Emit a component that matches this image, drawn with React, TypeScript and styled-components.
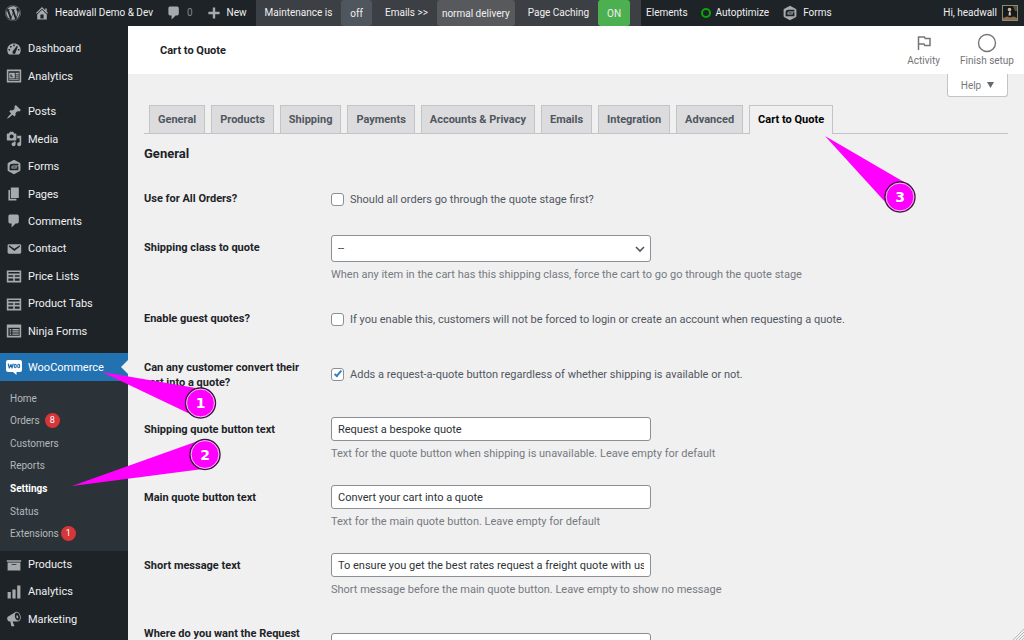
import React from "react";
import styled, { createGlobalStyle, css } from "styled-components";
import { FaWordpress } from "react-icons/fa";

const GlobalStyle = createGlobalStyle`
  *, *::before, *::after { box-sizing: border-box; }
  body { margin: 0; background: #f0f0f1; font-family: Roboto, "Liberation Sans", sans-serif; font-size: 11px; color: #3c434a; }
  ul { list-style: none; margin: 0; padding: 0; }
  a { color: inherit; text-decoration: none; }
  h1, h2 { margin: 0; }
  button, input, select { font-family: inherit; }
`;

/* ---------- icons, drawn on a 20 unit grid ---------- */

const paths = {
  home: "M16 8.5l1.53 1.53-1.06 1.06L10 4.6l-6.47 6.49-1.06-1.06L10 2.5l4 4v-2h2v4zm-6-2.46l6 5.99V18H4v-5.97zM12 17v-5H8v5h4z",
  comment: "M5 2h9c1.1 0 2 .9 2 2v7c0 1.1-.9 2-2 2h-2l-5 5v-5H5c-1.1 0-2-.9-2-2V4c0-1.1.9-2 2-2z",
  plus: "M17 8.5v3h-5.5V17h-3v-5.5H3v-3h5.5V3h3v5.5z",
  dashboard:
    "M3.76 17h12.48c1.34-1.59 2.15-3.65 2.15-5.9C18.39 6.07 14.6 3 10 3S1.61 6.07 1.61 11.1c0 2.25.81 4.31 2.15 5.9zM9 4.5h2v2H9zM5 6.2h2v2H5zM3.2 10h2v2h-2zM14.8 10h2v2h-2zM8.2 13.2L13.6 6l1.2.8-3 8.2a2 2 0 1 1-3.6-1.8z",
  analytics:
    "M1 2h18v16H1zM3 4v12h14V4zM4 6h7v7H4zM6 8a2 2 0 1 0 3 2.6H7V8zM12 6h4v2h-4zM12 9h4v1.5h-4zM12 11.5h4V13h-4zM4 14h12v1H4z",
  pin: "M10.44 3.02l1.82-1.82 6.36 6.35-1.83 1.82c-1.05-.68-2.48-.57-3.41.36l-.75.75c-.92.93-1.04 2.35-.35 3.41l-1.83 1.82-2.41-2.41-2.8 2.79c-.42.42-3.38 2.71-3.8 2.29s1.86-3.39 2.28-3.81l2.79-2.79L4.1 9.36l1.83-1.82c1.05.69 2.48.57 3.4-.36l.75-.75c.93-.92 1.05-2.35.36-3.41z",
  media:
    "M13 11V4c0-.55-.45-1-1-1h-1.67L9 1H5L3.67 3H2c-.55 0-1 .45-1 1v7c0 .55.45 1 1 1h10c.55 0 1-.45 1-1zM7 4.5c1.38 0 2.5 1.12 2.5 2.5S8.38 9.5 7 9.5 4.5 8.38 4.5 7 5.62 4.5 7 4.5zM14 6h5v10.5c0 1.38-1.12 2.5-2.5 2.5S14 17.88 14 16.5s1.12-2.5 2.5-2.5c.17 0 .34.02.5.05V9h-3V6zm-4 8.05V13h2v3.5c0 1.38-1.12 2.5-2.5 2.5S7 17.88 7 16.5 8.12 14 9.5 14c.17 0 .34.02.5.05z",
  hexagon:
    "M10 1l7 3.6c.7.4 1 .9 1 1.6v7.6c0 .7-.3 1.200-1 1.600L10 19l-7-3.600c-.7-.4-1-.9-1-1.600V6.200c0-.7.3-1.200 1-1.600zM8 6C5.500 6 4.500 7.500 4.500 10V14h11V9.200h-2.200v2.600H6.800C6.800 9.200 7.200 8.200 8.500 8.200H15.500V6zM8 9.400v1.200h4.300V9.400z",
  pages: "M6 15V2h10v13H6zm-1 1h8v2H3V5h2v11z",
  email:
    "M3.87 4h13.25C18.37 4 19 4.59 19 5.79v8.42c0 1.19-.63 1.79-1.88 1.79H3.87c-1.25 0-1.88-.6-1.88-1.79V5.79c0-1.2.63-1.79 1.88-1.79zm6.62 8.6l6.74-5.53c.24-.2.43-.66.13-1.07-.29-.41-.82-.42-1.17-.17l-5.7 3.86L4.8 5.83c-.35-.25-.88-.24-1.17.17-.3.41-.11.87.13 1.07z",
  table:
    "M19 18V3H1v15h18zM17 7H3V5h14v2zm-8 4H3V9h6v2zm8 0h-6V9h6v2zm-8 5H3v-3h6v3zm8 0h-6v-3h6v3z",
  form: "M1 2h18v16H1zM3 6v10h14V6zM4.500 7.500h2v2h-2zM8 7.500h8v1.800H8zM4.500 10.300h2v1.600h-2zM8 10.300h8v1.600H8zM4.500 13h2v1.800h-2zM8 13h8v1.800H8z",
  archive: "M19 4v2H1V4h18zM2 7h16v10H2V7zm11 3V9H7v1h6z",
  chart: "M18 18V2h-4v16h4zm-6 0V7H8v11h4zm-6 0v-8H2v8h4z",
  megaphone:
    "M18.15 5.94c.46 1.62.38 3.22-.02 4.48-.42 1.28-1.26 2.18-2.3 2.48-.16.06-.26.06-.4.06-.06.02-.12.02-.18.02-.06.02-.14.02-.22.02h-6.8l2.22 5.5c.02.14-.06.26-.14.34-.08.1-.24.16-.34.16H6.95c-.1 0-.26-.06-.34-.16-.08-.08-.16-.2-.14-.34l-1-5.5H4.25l-.02-.02c-.5.06-1.08-.18-1.54-.62s-.88-1.08-1.06-1.88c-.24-.8-.2-1.56-.02-2.2.18-.62.58-1.08 1.06-1.3l.02-.02 9-5.4c.1-.06.18-.1.24-.16.06-.04.14-.08.24-.12.16-.08.28-.12.5-.18 1.04-.3 2.24.1 3.22.98s1.84 2.24 2.26 3.86zm-2.58 5.98h-.02c.4-.1.74-.34 1.04-.7.58-.7.86-1.76.86-3.04 0-.64-.1-1.3-.28-1.98-.34-1.36-1.02-2.5-1.78-3.24s-1.68-1.1-2.46-.88c-.82.22-1.4.96-1.7 2-.32 1.04-.28 2.36.06 3.72.38 1.36 1 2.5 1.8 3.24.78.74 1.62 1.1 2.48.88zM13.500 5c.8.3 1.500 1.200 1.700 2.200s0 2-.6 2.300l-1.800-1.700z",
};

type IconName = keyof typeof paths;

const IconSvg = styled.svg`
  flex: none;
  display: block;
  width: 16px;
  height: 16px;
`;

const Icon = ({ name }: { name: IconName }) => (
  <IconSvg viewBox="0 0 20 20" fill="#a7aaad" fillRule="evenodd" aria-hidden="true">
    <path d={paths[name]} />
  </IconSvg>
);

const WooIcon = () => (
  <IconSvg viewBox="0 0 16 16" aria-hidden="true">
    <path d="M2 1h12a2 2 0 0 1 2 2v8a2 2 0 0 1-2 2h-3.500v3L7 13H2a2 2 0 0 1-2-2V3a2 2 0 0 1 2-2z" fill="#fff" />
    <path
      d="M2.300 5l1 4 1.700-3.500L6 9l1.200-4"
      fill="none"
      stroke="#2271b1"
      strokeWidth="1.200"
      strokeLinejoin="round"
      strokeLinecap="round"
    />
    <ellipse cx="9.300" cy="7" rx="1" ry="1.800" fill="none" stroke="#2271b1" strokeWidth="1.100" />
    <ellipse cx="12.700" cy="7" rx="1" ry="1.800" fill="none" stroke="#2271b1" strokeWidth="1.100" />
  </IconSvg>
);

/* ---------- admin bar ---------- */

const Page = styled.div`
  position: relative;
  display: flex;
  flex-direction: column;
  height: 100vh;
  overflow: hidden;
`;

const AdminBar = styled.header`
  flex: none;
  display: flex;
  height: 26px;
  background: #1d2327;
  color: #f0f0f1;
  font-size: 10px;
  line-height: 26px;
  white-space: nowrap;
`;

const BarLink = styled.a`
  display: flex;
  align-items: center;
  gap: 5px;
  padding: 0 8px 0 5px;
`;

const Muted = styled.span`
  color: #82878c;
`;

const WpLogo = styled(FaWordpress)`
  width: 16px;
  height: 16px;
  color: #a7aaad;
`;

const BarStatus = styled.div`
  display: flex;
  margin-left: 1px;
  padding-right: 7px;
  background: #3c3f43;
`;

const StatusLabel = styled.span`
  padding: 0 9px;

  & + button { margin-right: 4px; }
`;

const StatusButton = styled.button<{ $tone: "slate" | "grey" | "green" }>`
  height: 26px;
  padding: 0 ${(p) => (p.$tone === "grey" ? 5 : 9)}px;
  border: 0;
  border-radius: 3px;
  color: #f0f0f1;
  font-size: 10px;
  background: ${(p) => ({ slate: "#50565d", grey: "#58595c", green: "#4caf50" })[p.$tone]};
`;

const Ring = styled.span`
  width: 10px;
  height: 10px;
  border: 2px solid #0aa60a;
  border-radius: 50%;
`;

const Account = styled(BarLink)`
  margin-left: auto;
  padding-right: 6px;
`;

const Avatar = () => (
  <IconSvg viewBox="0 0 16 16" role="img" aria-label="headwall">
    <rect width="16" height="16" fill="#8b8b72" />
    <rect x="1" y="1" width="14" height="14" fill="#17191a" />
    <path d="M1 15v-2l4-1.500 3 1 4-1 3 1.500v2z" fill="#8e6a50" />
    <circle cx="7.500" cy="4.500" r="1.800" fill="#d0b39c" />
    <path d="M7 6.500h1.500l.5 4H6.500z" fill="#c9c9c4" />
    <path d="M11 1h4v5h-2z" fill="#4e5a3b" />
  </IconSvg>
);

/* ---------- sidebar ---------- */

const Body = styled.div`
  flex: 1;
  display: flex;
  min-height: 0;
`;

const Sidebar = styled.nav`
  flex: none;
  display: flex;
  flex-direction: column;
  gap: 8px;
  width: 128px;
  padding-top: 9px;
  background: #1d2327;
  color: #f0f0f1;
`;

const MenuGroup = styled.ul<{ $height: number }>`
  display: grid;
  grid-auto-rows: 1fr;
  min-height: ${(p) => p.$height}px;
`;

const MenuLink = styled.a<{ $current?: boolean }>`
  position: relative;
  display: flex;
  align-items: center;
  gap: 6px;
  height: 100%;
  padding: 0 6px;
  line-height: 27px;
  ${(p) =>
    p.$current &&
    css`
      height: 28px;
      background: #2271b1;
      color: #fff;

      &::after {
        content: "";
        position: absolute;
        right: 0;
        border: 7px solid transparent;
        border-left: 0;
        border-right-color: #f0f0f1;
      }
    `}
`;

const SubMenu = styled.ul`
  display: grid;
  grid-auto-rows: 1fr;
  min-height: 170px;
  padding: 6px 10px;
  background: #2c3338;
  color: #b4b8bc;
  font-size: 10px;
`;

const SubLink = styled.a<{ $current?: boolean }>`
  display: flex;
  align-items: center;
  height: 100%;
  ${(p) => p.$current && css`color: #fff; font-weight: 700;`}
`;

const Count = styled.span<{ $tight?: boolean }>`
  width: 15px;
  height: 15px;
  margin-left: ${(p) => (p.$tight ? 2 : 5)}px;
  border-radius: 50%;
  background: #d63638;
  color: #fff;
  font-size: 9px;
  line-height: 15px;
  text-align: center;
`;

const WooGroup = styled.div`
  display: flex;
  flex-direction: column;
`;

/* ---------- content ---------- */

const Content = styled.main`
  position: relative;
  flex: 1;
  min-width: 0;
`;

const TitleBar = styled.div`
  display: flex;
  align-items: center;
  height: 48px;
  padding: 0 10px 0 32px;
  background: #fff;
`;

const Title = styled.h1`
  flex: 1;
  color: #1d2327;
  font-size: 11px;
  font-weight: 700;
`;

const Actions = styled.div`
  display: flex;
  gap: 20px;
`;

const ActionButton = styled.button`
  display: flex;
  flex-direction: column;
  align-items: center;
  gap: 1px;
  padding: 0;
  border: 0;
  background: none;
  color: #757575;
  font-size: 10px;
  line-height: 14px;

  svg { width: 20px; height: 20px; }
`;

const HelpRow = styled.div`
  display: flex;
  justify-content: flex-end;
  height: 31px;
  padding: 0 16px;
`;

const HelpButton = styled.button`
  display: flex;
  align-items: center;
  justify-content: center;
  gap: 6px;
  width: 61px;
  height: 23px;
  padding: 0;
  border: 1px solid #c3c4c7;
  border-top: 0;
  border-radius: 0 0 3px 3px;
  background: #fff;
  color: #757a80;
  font-size: 10px;

  svg { width: 7px; height: 6px; }
`;

const Tabs = styled.nav`
  display: flex;
  gap: 6px;
  margin: 0 16px;
  padding: 0 5px;
  border-bottom: 1px solid #c3c4c7;
`;

const Tab = styled.a<{ $current?: boolean }>`
  height: 28px;
  padding: 0 8px;
  border: 1px solid #c3c4c7;
  border-bottom: 0;
  background: #dcdcde;
  color: #50575e;
  font-weight: 700;
  line-height: 27px;
  white-space: nowrap;
  ${(p) =>
    p.$current &&
    css`
      height: 29px;
      margin-bottom: -1px;
      background: #f0f0f1;
      color: #000;
    `}
`;

const SectionTitle = styled.h2`
  padding: 12px 16px;
  color: #1d2327;
  font-size: 13px;
  line-height: 16px;
`;

const SettingsForm = styled.form`
  padding: 0 16px;
`;

const Row = styled.div<{ $tall?: boolean }>`
  display: grid;
  grid-template-columns: 187px minmax(0, 1fr);
  align-items: ${(p) => (p.$tall ? "start" : "stretch")};
  min-height: ${(p) => (p.$tall ? 77 : 49)}px;
`;

const RowLabel = styled.label`
  padding: 17px 20px 15px 0;
  color: #1d2327;
  font-weight: 700;
  line-height: 15px;
`;

const Cell = styled.div`
  display: flex;
  flex-direction: column;
  justify-content: center;
  gap: 4px;
  padding: 12px 0 11px;
`;

const TallCell = styled(Cell)`
  padding: 24px 0;
`;

const Hint = styled.p`
  margin: 0;
  color: #757a80;
  line-height: 17px;
`;

const CheckLabel = styled.label`
  display: flex;
  align-items: center;
  gap: 6px;
  color: #50575e;
`;

const Checkbox = styled.input`
  appearance: none;
  position: relative;
  width: 13px;
  height: 13px;
  margin: 0;
  border: 1px solid #8c8f94;
  border-radius: 3px;
  background: #fff;

  &:checked::after {
    content: "";
    position: absolute;
    left: 4px;
    top: 0;
    width: 4px;
    height: 8px;
    border: solid #3582c4;
    border-width: 0 2px 2px 0;
    transform: rotate(40deg);
  }
`;

const fieldStyle = css`
  width: 320px;
  max-width: 100%;
  border: 1px solid #8c8f94;
  border-radius: 3px;
  background: #fff;
  color: #2c3338;
  font-size: 11px;
`;

const TextField = styled.input`
  ${fieldStyle}
  height: 24px;
  padding: 0 6px;
`;

const SelectWrap = styled.div`
  position: relative;
  width: 320px;
  max-width: 100%;
  height: 27px;

  svg {
    position: absolute;
    right: 6px;
    top: 9px;
    width: 10px;
    height: 10px;
    pointer-events: none;
  }
`;

const Select = styled.select`
  ${fieldStyle}
  appearance: none;
  height: 27px;
  padding: 0 6px;
`;

const SelectField = ({ id, value }: { id: string; value: string }) => (
  <SelectWrap>
    <Select id={id} defaultValue={value}>
      <option>{value}</option>
    </Select>
    <svg viewBox="0 0 10 10" fill="none" stroke="#50575e" strokeWidth="1.600" aria-hidden="true">
      <path d="M1 3l4 4 4-4" />
    </svg>
  </SelectWrap>
);

const ResizeGrip = styled.svg`
  position: absolute;
  right: 0;
  bottom: 0;
  width: 12px;
  height: 12px;
`;

/* ---------- numbered callouts laid over the page ---------- */

const CalloutLayer = styled.svg`
  position: absolute;
  left: 0;
  top: 0;
  width: 1024px;
  height: 640px;
  pointer-events: none;
  font-family: "DejaVu Sans", sans-serif;
  font-size: 14px;
  font-weight: 700;
`;

const callouts = [
  { n: 1, x: 200.500, y: 403, wedge: "102,372 196,388 188,413" },
  { n: 2, x: 205, y: 454.500, wedge: "72,486 198,441 203,469" },
  { n: 3, x: 900, y: 197, wedge: "825,136 904,182 887,204" },
];

/* ---------- data ---------- */

type Item = [string, IconName];

const topItems: Item[] = [["Dashboard", "dashboard"], ["Analytics", "analytics"]];
const siteItems: Item[] = [
  ["Posts", "pin"],
  ["Media", "media"],
  ["Forms", "hexagon"],
  ["Pages", "pages"],
  ["Comments", "comment"],
  ["Contact", "email"],
  ["Price Lists", "table"],
  ["Product Tabs", "table"],
  ["Ninja Forms", "form"],
];
const shopItems: Item[] = [["Products", "archive"], ["Analytics", "chart"], ["Marketing", "megaphone"]];
const subItems: { label: string; count?: number; tight?: boolean }[] = [
  { label: "Home" },
  { label: "Orders", count: 8 },
  { label: "Customers" },
  { label: "Reports" },
  { label: "Settings" },
  { label: "Status" },
  { label: "Extensions", count: 1, tight: true },
];
const tabs = [
  "General",
  "Products",
  "Shipping",
  "Payments",
  "Accounts & Privacy",
  "Emails",
  "Integration",
  "Advanced",
  "Cart to Quote",
];

const Menu = ({ items, height }: { items: Item[]; height: number }) => (
  <MenuGroup $height={height}>
    {items.map(([label, icon]) => (
      <li key={label}>
        <MenuLink href="#">
          <Icon name={icon} />
          {label}
        </MenuLink>
      </li>
    ))}
  </MenuGroup>
);

const CheckRow = ({ id, label, text, checked }: { id: string; label: string; text: string; checked?: boolean }) => (
  <Row>
    <RowLabel htmlFor={id}>{label}</RowLabel>
    <Cell>
      <CheckLabel>
        <Checkbox type="checkbox" id={id} defaultChecked={checked} />
        {text}
      </CheckLabel>
    </Cell>
  </Row>
);

const TextRow = ({ id, label, value, hint }: { id: string; label: string; value: string; hint: string }) => (
  <Row>
    <RowLabel htmlFor={id}>{label}</RowLabel>
    <Cell>
      <TextField type="text" id={id} defaultValue={value} />
      <Hint>{hint}</Hint>
    </Cell>
  </Row>
);

export default function App() {
  return (
    <Page>
      <GlobalStyle />
      <AdminBar>
        <BarLink href="#" aria-label="WordPress"><WpLogo /></BarLink>
        <BarLink href="#"><Icon name="home" />Headwall Demo &amp; Dev</BarLink>
        <BarLink href="#"><Icon name="comment" /><Muted>0</Muted></BarLink>
        <BarLink href="#"><Icon name="plus" />New</BarLink>
        <BarStatus>
          <StatusLabel>Maintenance is</StatusLabel>
          <StatusButton $tone="slate">off</StatusButton>
          <StatusLabel>Emails &gt;&gt;</StatusLabel>
          <StatusButton $tone="grey">normal delivery</StatusButton>
          <StatusLabel>Page Caching</StatusLabel>
          <StatusButton $tone="green">ON</StatusButton>
        </BarStatus>
        <BarLink href="#">Elements</BarLink>
        <BarLink href="#"><Ring />Autoptimize</BarLink>
        <BarLink href="#"><Icon name="hexagon" />Forms</BarLink>
        <Account href="#">Hi, headwall<Avatar /></Account>
      </AdminBar>
      <Body>
        <Sidebar>
          <Menu items={topItems} height={55} />
          <Menu items={siteItems} height={247} />
          <WooGroup>
            <MenuLink href="#" $current><WooIcon />WooCommerce</MenuLink>
            <SubMenu>
              {subItems.map(({ label, count, tight }) => (
                <li key={label}>
                  <SubLink href="#" $current={label === "Settings"}>
                    {label}
                    {count && <Count $tight={tight}>{count}</Count>}
                  </SubLink>
                </li>
              ))}
            </SubMenu>
            <Menu items={shopItems} height={82} />
          </WooGroup>
        </Sidebar>
        <Content>
          <TitleBar>
            <Title>Cart to Quote</Title>
            <Actions>
              <ActionButton>
                <svg viewBox="0 0 20 20" fill="none" stroke="#757575" strokeWidth="1.500" aria-hidden="true">
                  <path d="M4.500 17V4h6l.7 1.500H16v7h-5.200L10 11H4.500" />
                </svg>
                Activity
              </ActionButton>
              <ActionButton>
                <svg viewBox="0 0 20 20" fill="none" stroke="#757575" strokeWidth="1.400" aria-hidden="true">
                  <circle cx="10" cy="10" r="8.500" />
                </svg>
                Finish setup
              </ActionButton>
            </Actions>
          </TitleBar>
          <HelpRow>
            <HelpButton>
              Help
              <svg viewBox="0 0 7 6" aria-hidden="true"><path d="M0 0h7L3.500 6z" fill="#646970" /></svg>
            </HelpButton>
          </HelpRow>
          <Tabs>
            {tabs.map((tab) => (
              <Tab key={tab} href="#" $current={tab === "Cart to Quote"}>{tab}</Tab>
            ))}
          </Tabs>
          <SectionTitle>General</SectionTitle>
          <SettingsForm>
            <CheckRow id="all-orders" label="Use for All Orders?" text="Should all orders go through the quote stage first?" />
            <Row>
              <RowLabel htmlFor="shipping-class">Shipping class to quote</RowLabel>
              <Cell>
                <SelectField id="shipping-class" value="--" />
                <Hint>When any item in the cart has this shipping class, force the cart to go go through the quote stage</Hint>
              </Cell>
            </Row>
            <CheckRow
              id="guest-quotes"
              label="Enable guest quotes?"
              text="If you enable this, customers will not be forced to login or create an account when requesting a quote."
            />
            <CheckRow
              id="convert-cart"
              label="Can any customer convert their cart into a quote?"
              text="Adds a request-a-quote button regardless of whether shipping is available or not."
              checked
            />
            <TextRow
              id="shipping-button"
              label="Shipping quote button text"
              value="Request a bespoke quote"
              hint="Text for the quote button when shipping is unavailable. Leave empty for default"
            />
            <TextRow
              id="main-button"
              label="Main quote button text"
              value="Convert your cart into a quote"
              hint="Text for the main quote button. Leave empty for default"
            />
            <TextRow
              id="short-message"
              label="Short message text"
              value="To ensure you get the best rates request a freight quote with us"
              hint="Short message before the main quote button. Leave empty to show no message"
            />
            <Row $tall>
              <RowLabel htmlFor="button-place">Where do you want the Request</RowLabel>
              <TallCell><SelectField id="button-place" value="" /></TallCell>
            </Row>
          </SettingsForm>
          <ResizeGrip viewBox="0 0 12 12" stroke="#b0b0b0" strokeWidth="0.900" aria-hidden="true">
            <path d="M1 12L12 1M4 12l8-8M7 12l5-5M10 12l2-2" />
          </ResizeGrip>
        </Content>
      </Body>
      <CalloutLayer viewBox="0 0 1024 640">
        {callouts.map(({ n, x, y, wedge }) => (
          <g key={n}>
            <polygon points={wedge} fill="#ff00ff" />
            <circle cx={x} cy={y} r="15" fill="#ff00ff" stroke="#3a1a3a" strokeWidth="1.400" />
            <circle cx={x} cy={y} r="13.900" fill="none" stroke="#f3d5f3" strokeWidth="0.900" />
            <text x={x} y={y + 5} textAnchor="middle" fill="#fff">{n}</text>
          </g>
        ))}
      </CalloutLayer>
    </Page>
  );
}
